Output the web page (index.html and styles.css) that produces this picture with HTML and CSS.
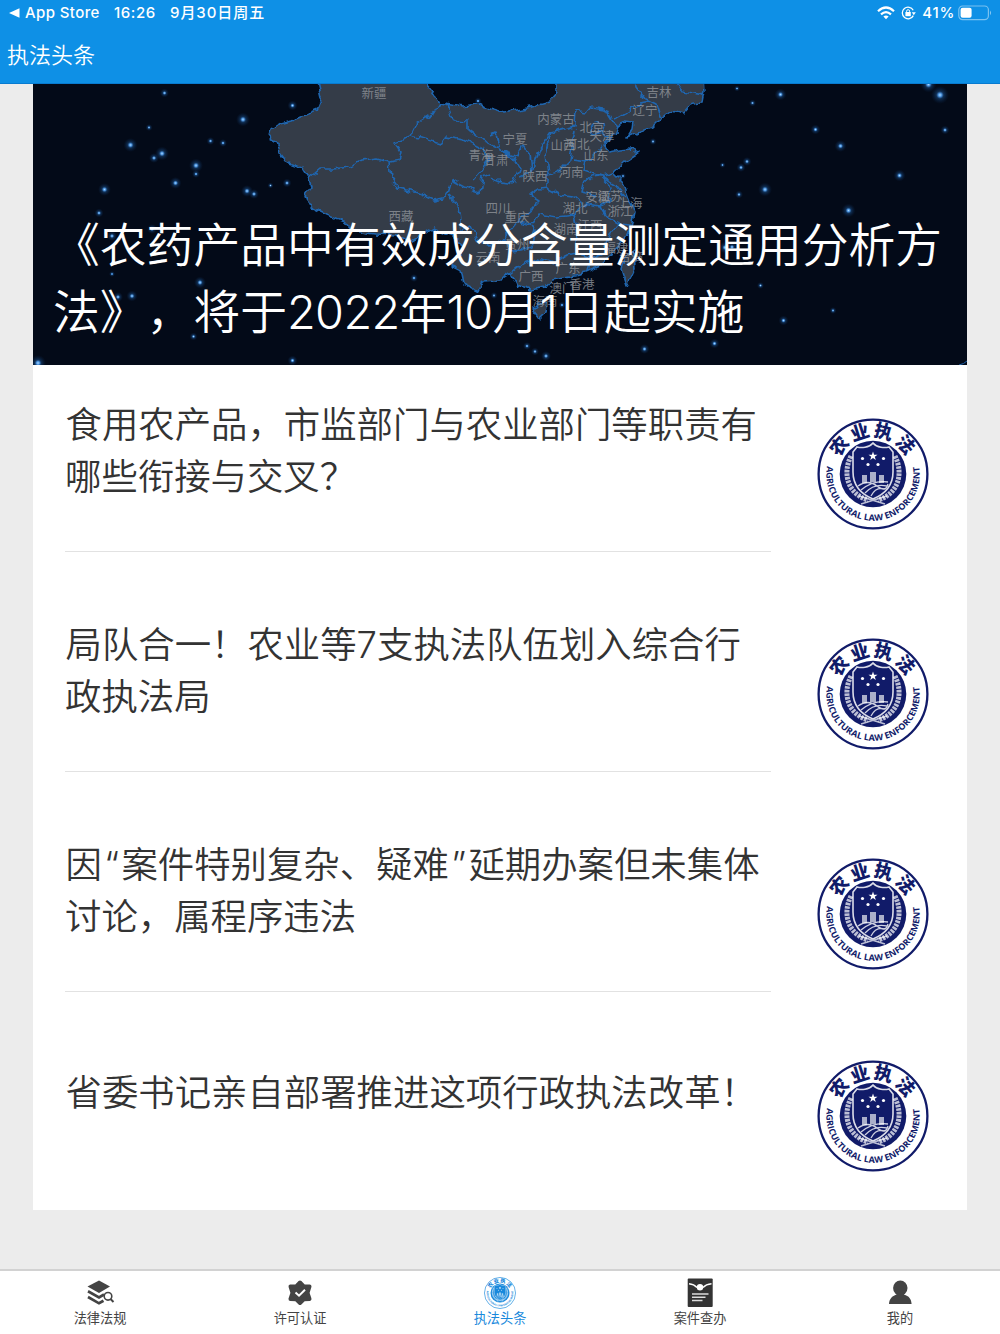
FILE: index.html
```html
<!DOCTYPE html>
<html lang="zh-CN">
<head>
    <meta charset="UTF-8">
    <title>执法头条</title>
    <link rel="stylesheet" href="styles.css">
</head>
<body>
    <svg class="defs" width="0" height="0">
        <defs>
            <path id="arc-bottom" d="M-46 -8 A46.7 46.7 0 1 0 46 -8"/>
            <symbol id="emblem" viewBox="-56 -56 112 112">
                <circle r="54.4" fill="#fff" stroke="currentColor" stroke-width="2.3"/>
                <circle r="33.3" fill="currentColor"/>
                <g class="emblem-cn">
                    <text transform="rotate(-50.5) translate(0 -37)">农</text>
                    <text transform="rotate(-17.5) translate(0 -37)">业</text>
                    <text transform="rotate(14) translate(0 -37)">执</text>
                    <text transform="rotate(48) translate(0 -37)">法</text>
                </g>
                <text class="emblem-en"><textPath href="#arc-bottom" textLength="162" lengthAdjust="spacingAndGlyphs">AGRICULTURAL LAW ENFORCEMENT</textPath></text>
                <!-- wheat -->
                <g fill="none" stroke="#fff" stroke-opacity=".72">
                    <path d="M-22 -18 C-31 0 -25 20 -5 26 M22 -18 C31 0 25 20 5 26" stroke-width="5" stroke-dasharray="2.6 1"/>
                    <path d="M-14 22 L12 30 M14 22 L-12 30" stroke-width="1.5"/>
                </g>
                <!-- shield -->
                <path d="M0 -31 C-4 -26 -12 -26 -16 -27 L-20 -22 V-2 C-20 11 -12 20 0 25 C12 20 20 11 20 -2 V-22 L16 -27 C12 -26 4 -26 0 -31Z" fill="currentColor" stroke="#fff" stroke-opacity=".85" stroke-width="1.6"/>
                <g fill="#fff">
                    <path d="M0 -22.5 L1.1 -19.3 L4.5 -19.3 L1.8 -17.2 L2.8 -14 L0 -16 L-2.8 -14 L-1.8 -17.2 L-4.5 -19.3 L-1.1 -19.3Z"/>
                    <circle cx="-10.5" cy="-15.5" r="1.6"/>
                    <circle cx="10.5" cy="-15.5" r="1.6"/>
                    <circle cx="-5" cy="-9.5" r="1.6"/>
                    <circle cx="5" cy="-9.5" r="1.6"/>
                    <path opacity=".65" d="M-11 1 h5 v8 h-5z M-3 -2 h6 v10 h-6z M6 1 h5 v8 h-5z"/>
                </g>
                <path d="M-15 12 Q-5 5 4 12 T15 10 M-12 16 Q0 6 15 8 M-8 19 Q1 9 14 12 M-2 22 Q3 12 12 15" fill="none" stroke="#fff" stroke-opacity=".8" stroke-width="1.3"/>
            </symbol>
        </defs>
    </svg>

    <header class="header">
        <div class="status-bar">
            <div class="status-left">
                <svg width="11" height="10" viewBox="0 0 11 10"><path d="M0 5 L10.5 .3 V9.7Z" fill="#fff"/></svg>
                <span class="status-app">App Store</span>
                <span class="status-time">16:26</span>
                <span class="status-date">9月30日周五</span>
            </div>
            <div class="status-right">
                <svg width="18" height="14" viewBox="0 0 18 14" fill="none" stroke="#fff" stroke-width="2.2">
                    <path d="M1 5.2 Q9 -2.2 17 5.2"/>
                    <path d="M4 8.4 Q9 3.9 14 8.4"/>
                    <path d="M6.4 10.6 Q9 8.4 11.6 10.6 L9 13.3Z" fill="#fff" stroke="none"/>
                </svg>
                <svg class="lock" width="15" height="14" viewBox="0 0 15 14" fill="none" stroke="#fff" stroke-width="1.3">
                    <path d="M12.2 4.2 A5.8 5.8 0 1 0 12.3 9.6"/>
                    <path d="M10.8 6.2 h4 l-2 3z" fill="#fff" stroke="none"/>
                    <rect x="4.4" y="6" width="5.4" height="4.2" fill="#fff" stroke="none"/>
                    <path d="M5.6 6.4 V5.2 a1.5 1.5 0 0 1 3 0 V6.4" stroke-width="1"/>
                </svg>
                <span class="status-battery">41%</span>
                <svg width="35" height="16" viewBox="0 0 35 16">
                    <rect x=".8" y="1" width="29.6" height="13.6" rx="3.8" fill="none" stroke="#fff" stroke-opacity=".45" stroke-width="1.2"/>
                    <rect x="2.6" y="2.8" width="11" height="10" rx="2" fill="#fff"/>
                    <path d="M32 5.4 q2.2 2.3 0 4.8z" fill="#fff" fill-opacity=".5"/>
                </svg>
            </div>
        </div>
        <h1 class="title">执法头条</h1>
    </header>

    <main class="card">
        <section class="banner">
            <svg class="banner-map" viewBox="33 84 934 281">
                <defs>
                    <filter id="rough" x="-5%" y="-5%" width="110%" height="110%" color-interpolation-filters="sRGB">
                        <feTurbulence type="fractalNoise" baseFrequency=".11" numOctaves="2" seed="4"/>
                        <feDisplacementMap in="SourceGraphic" scale="8" xChannelSelector="R" yChannelSelector="G"/>
                    </filter>
                    <radialGradient id="glow">
                        <stop offset="0" stop-color="#a9d8ff"/>
                        <stop offset=".2" stop-color="#4a91dc"/>
                        <stop offset=".42" stop-color="#174579" stop-opacity=".6"/>
                        <stop offset="1" stop-color="#0a2448" stop-opacity="0"/>
                    </radialGradient>
                </defs>
                <g filter="url(#rough)" stroke="#1f66b0" stroke-width="1.6" stroke-linejoin="round">
                    <path fill="#343c48" d="M317 76 L322 98 L317 110 L291 121 L280 124 L271 130 L269 137 L276 141 L279 153 L286 162 L302 168 L309 179 L311 186 L305 194 L309 206 L326 214 L345 222 L352 231 L375 234 L396 235 L412 241 L434 228 L447 234 L459 238 L463 249 L451 265 L461 270 L464 284 L478 291 L482 281 L500 280 L511 273 L518 286 L530 290 L545 287 L552 279 L570 276 L587 272 L600 266 L612 255 L623 241 L632 226 L635 213 L630 201 L623 183 L613 173 L627 160 L638 153 L630 149 L620 150 L610 152 L604 145 L615 134 L618 127 L612 121 L618 127 L625 122 L633 123 L632 130 L627 138 L640 132 L652 128 L661 119 L671 111 L682 114 L690 105 L702 103 L704 92 L703 76 L557 76 L557 93 L549 102 L527 108 L503 113 L477 105 L462 107 L440 103 L432 90 L420 76Z"/>
                    <path fill="#343c48" d="M533 311 L540 304 L548 303 L546 312 L539 319Z M621 270 L625 257 L634 251 L635 267 L626 286Z"/>
                    <g fill="none">
                        <path d="M309 178 L320 169 L334 169 L350 167 L362 161 L378 159 L389 162 L399 160 L401 152 L394 142 L410 136 L416 124 L434 113 L440 103"/>
                        <path d="M389 162 L391 179 L398 188 L418 193 L434 200 L446 197 L451 180 L464 187 L480 192 L483 177 L490 174"/>
                        <path d="M410 136 L425 139 L441 144 L447 136 L464 139 L484 149 L490 159 L482 170 L474 179"/>
                        <path d="M447 104 L453 120 L468 121 L468 130 L480 139 L498 148 L513 158 L520 169 L514 184 L500 182 L491 178"/>
                        <path d="M449 195 L458 206 L461 230 L470 226 L477 240 L490 246 L504 237 L517 221 L531 209 L539 201 L529 195 L538 189 L551 188"/>
                        <path d="M490 136 L496 133 L500 150 L517 157 L523 145 L530 155 L532 171 L520 176 M532 171 L538 150 L550 133 L574 126 L575 111 L586 113 L591 107 L604 109 L612 122"/>
                        <path d="M551 132 L546 155 L548 175 L548 188 M575 129 L572 146 L570 160 L558 172 L548 175 M572 160 L586 162 L602 146 M586 162 L584 170 L602 176 L613 173"/>
                        <path d="M591 128 L594 121 L602 123 L603 132 L592 135Z M602 132 L608 136 L604 143"/>
                        <path d="M548 188 L559 194 L573 196 L582 204 L600 207 L609 201 L611 188 L600 176 L592 177 L584 184 L582 192 L597 195 M600 176 L616 186 L626 198"/>
                        <path d="M517 221 L532 225 L539 214 L557 217 L574 215 L582 204 M574 215 L578 234 L576 253 L564 256 L554 263 L538 258 L524 263 L512 273"/>
                        <path d="M503 237 L512 251 L520 250 L532 246 L536 231 L532 225 M576 253 L592 258 L604 253 L610 234 L619 224 L631 225 M592 258 L588 271 M600 207 L606 217 L619 224"/>
                        <path d="M635 76 L637 87 L646 99 L656 104 L661 119 M614 119 L628 111 L640 103 L650 101 M670 76 L682 92 L704 96"/>
                    </g>
                </g>
                <g class="province">
                    <text x="374" y="98">新疆</text>
                    <text x="659" y="97">吉林</text>
                    <text x="645" y="115">辽宁</text>
                    <text x="556" y="124">内蒙古</text>
                    <text x="592" y="132">北京</text>
                    <text x="602" y="141">天津</text>
                    <text x="515" y="144">宁夏</text>
                    <text x="563" y="150">山西</text>
                    <text x="577" y="149">河北</text>
                    <text x="481" y="160">青海</text>
                    <text x="496" y="165">甘肃</text>
                    <text x="596" y="160">山东</text>
                    <text x="535" y="181">陕西</text>
                    <text x="571" y="177">河南</text>
                    <text x="401" y="221">西藏</text>
                    <text x="498" y="213">四川</text>
                    <text x="517" y="222">重庆</text>
                    <text x="575" y="213">湖北</text>
                    <text x="598" y="202">安徽</text>
                    <text x="610" y="201">江苏</text>
                    <text x="630" y="208">上海</text>
                    <text x="620" y="216">浙江</text>
                    <text x="566" y="234">湖南</text>
                    <text x="590" y="230">江西</text>
                    <text x="517" y="249">贵州</text>
                    <text x="488" y="262">云南</text>
                    <text x="616" y="253">福建</text>
                    <text x="631" y="262">台湾</text>
                    <text x="531" y="281">广西</text>
                    <text x="568" y="273">广东</text>
                    <text x="582" y="289">香港</text>
                    <text x="562" y="293">澳门</text>
                    <text x="545" y="306">海南</text>
                </g>
                <g fill="url(#glow)">
                    <circle cx="243" cy="119.500" r="7"/>
                    <circle cx="130.500" cy="145" r="7"/>
                    <circle cx="162" cy="153.500" r="7"/>
                    <circle cx="196" cy="165.500" r="7"/>
                    <circle cx="104.500" cy="189.500" r="6.500"/>
                    <circle cx="175.500" cy="183" r="6"/>
                    <circle cx="247" cy="191" r="6"/>
                    <circle cx="254" cy="194" r="5"/>
                    <circle cx="154" cy="158" r="5"/>
                    <circle cx="196" cy="174" r="4"/>
                    <circle cx="164.500" cy="93" r="4.500"/>
                    <circle cx="149" cy="127.500" r="3.500"/>
                    <circle cx="210.500" cy="141" r="4"/>
                    <circle cx="223" cy="143" r="4"/>
                    <circle cx="292.500" cy="105.500" r="5"/>
                    <circle cx="287" cy="183" r="4.500"/>
                    <circle cx="270.500" cy="185.500" r="3"/>
                    <circle cx="99" cy="213" r="4.500"/>
                    <circle cx="152" cy="229" r="5"/>
                    <circle cx="112" cy="236" r="5"/>
                    <circle cx="112" cy="274" r="3"/>
                    <circle cx="132" cy="296" r="5.500"/>
                    <circle cx="118" cy="297" r="5"/>
                    <circle cx="200" cy="282.500" r="6"/>
                    <circle cx="193.500" cy="336.500" r="4"/>
                    <circle cx="292.500" cy="360.500" r="5"/>
                    <circle cx="38" cy="363" r="8"/>
                    <circle cx="414" cy="278" r="4"/>
                    <circle cx="494" cy="295.500" r="3.500"/>
                    <circle cx="562" cy="305" r="3.500"/>
                    <circle cx="527" cy="346" r="4"/>
                    <circle cx="535" cy="351.500" r="4"/>
                    <circle cx="546" cy="356" r="5"/>
                    <circle cx="644.500" cy="349" r="5"/>
                    <circle cx="478" cy="101" r="3.500"/>
                    <circle cx="653" cy="141.500" r="3.500"/>
                    <circle cx="623" cy="176" r="3"/>
                    <circle cx="780.500" cy="94.500" r="6"/>
                    <circle cx="752.500" cy="103" r="3.500"/>
                    <circle cx="737" cy="88.500" r="3"/>
                    <circle cx="928.500" cy="84.500" r="8"/>
                    <circle cx="940" cy="95" r="9"/>
                    <circle cx="945" cy="130" r="4.500"/>
                    <circle cx="815.500" cy="129.500" r="5"/>
                    <circle cx="840.500" cy="146" r="6"/>
                    <circle cx="899.500" cy="175.500" r="6"/>
                    <circle cx="765" cy="189.500" r="7"/>
                    <circle cx="848.500" cy="210.500" r="7"/>
                    <circle cx="747" cy="161.500" r="4.500"/>
                    <circle cx="741" cy="167.500" r="4.500"/>
                    <circle cx="722.500" cy="165" r="3"/>
                    <circle cx="739" cy="194.500" r="4"/>
                    <circle cx="725" cy="247.500" r="6"/>
                    <circle cx="732" cy="247" r="5"/>
                    <circle cx="760.500" cy="285.500" r="3.500"/>
                    <circle cx="783.500" cy="320.500" r="5"/>
                    <circle cx="833" cy="310.500" r="3.500"/>
                    <circle cx="714.500" cy="343.500" r="5"/>
                </g>
                <path d="M959 365 Q964 364 967 361" fill="none" stroke="#1d62ab"/>
            </svg>
            <h2 class="banner-title">《农药产品中有效成分含量测定通用分析方<br>法》<span class="comma">，</span>将于<span class="num">2022</span>年<span class="num">10</span>月<span class="num">1</span>日起实施</h2>
        </section>

        <article class="item first">
            <div class="item-text">食用农产品，市监部门与农业部门等职责有<br>哪些衔接与交叉？</div>
            <svg class="item-logo"><use href="#emblem"/></svg>
        </article>
        <article class="item">
            <div class="item-text">局队合一！农业等7支执法队伍划入综合行<br>政执法局</div>
            <svg class="item-logo"><use href="#emblem"/></svg>
        </article>
        <article class="item">
            <div class="item-text">因<span class="quote">“</span>案件特别复杂、疑难<span class="quote">”</span>延期办案但未集体<br>讨论，属程序违法</div>
            <svg class="item-logo"><use href="#emblem"/></svg>
        </article>
        <article class="item last">
            <div class="item-text">省委书记亲自部署推进这项行政执法改革！</div>
            <svg class="item-logo"><use href="#emblem"/></svg>
        </article>
    </main>

    <nav class="tab-bar">
        <div class="tab">
            <svg class="tab-icon" viewBox="0 0 32 32">
                <path d="M15 3.500 L26 9.500 L15 16 L3.500 9.500Z" fill="#444"/>
                <path d="M4 14.300 L15 20.400 L20 17.500 M4 20 L15 26.300 L19.500 23.800" fill="none" stroke="#444" stroke-width="2.700"/>
                <circle cx="24" cy="19.300" r="3.800" fill="#fff" stroke="#444" stroke-width="1.600"/>
                <path d="M26.500 22 L29.500 25" stroke="#444" stroke-width="2"/>
            </svg>
            <span>法律法规</span>
        </div>
        <div class="tab">
            <svg class="tab-icon" viewBox="0 0 32 32">
                <path d="M16 5.500 L19.800 9.300 L25.500 9.500 L23.500 16 L25.500 22 L19.800 22.300 L16 26 L12.200 22.300 L6.500 22 L8.500 16 L6.500 9.500 L12.200 9.300Z" fill="#444" stroke="#444" stroke-width="4" stroke-linejoin="round"/>
                <path d="M11.500 15.500 L15 18.700 L21 12.700" fill="none" stroke="#fff" stroke-width="2"/>
            </svg>
            <span>许可认证</span>
        </div>
        <div class="tab active">
            <svg class="tab-icon"><use href="#emblem"/></svg>
            <span>执法头条</span>
        </div>
        <div class="tab">
            <svg class="tab-icon" viewBox="0 0 32 32">
                <rect x="3.700" y="1.500" width="25" height="28.500" rx="1" fill="#333"/>
                <path d="M5 6.800 Q10 7.300 13 10.500 M27.500 6.800 Q22 7.300 19 10.500" fill="none" stroke="#fff" stroke-width="1.500"/>
                <circle cx="16" cy="10.300" r="3.200" fill="#fff"/>
                <path d="M8 17 H24.500 M8 20.300 H21.500 M8 23.500 H18.500" stroke="#ddd" stroke-width="1.500"/>
            </svg>
            <span>案件查办</span>
        </div>
        <div class="tab">
            <svg class="tab-icon" viewBox="0 0 32 32" fill="#444">
                <ellipse cx="16.300" cy="11" rx="7.200" ry="7.500"/>
                <path d="M12.500 15 H20 V17.500 C25 19 27.300 22 27.600 27 H5 C5.300 22 8 19 12.500 17.500Z"/>
            </svg>
            <span>我的</span>
        </div>
    </nav>
</body>
</html>
```

FILE: styles.css
```css
* {
    box-sizing: border-box;
}
body {
    margin: 0;
    height: 1334px;
    display: flex;
    flex-direction: column;
    overflow: hidden;
    background-color: #ececec;
    color: #333;
    font-family: Inter, "Noto Sans CJK SC", sans-serif;
}
.defs {
    display: none;
}
svg {
    display: block;
}

/* Header */
.header {
    height: 84px;
    flex-shrink: 0;
    background-color: #0e90e6;
    color: #fff;
    border-bottom: 1px solid #087bd0;
}
.status-bar {
    height: 26px;
    display: flex;
    justify-content: space-between;
    align-items: center;
    padding: 0 7px 0 9px;
    font-size: 15px;
    line-height: 20px;
    font-weight: 500;
}
.status-left,
.status-right {
    display: flex;
    align-items: center;
    white-space: nowrap;
}
.status-app {
    margin-left: 5px;
    width: 89px;
    letter-spacing: 0.4px;
}
.status-time {
    width: 56px;
    letter-spacing: 0.6px;
}
.status-date {
    letter-spacing: 0.95px;
}
.lock {
    margin-left: 6px;
}
.status-battery {
    margin: 0 3px 0 6px;
    letter-spacing: 0.7px;
}
.title {
    margin: 12px 0 0 7px;
    font-size: 22px;
    line-height: 34px;
    font-weight: 350;
}

/* Card */
.card {
    width: 934px;
    height: 1126px;
    margin: 0 auto;
    flex-shrink: 0;
    background-color: #fff;
}
.banner {
    height: 281px;
    display: grid;
    background-color: #030a18;
    color: #fff;
    overflow: hidden;
}
.banner-map,
.banner-title {
    grid-area: 1 / 1;
}
.banner-map {
    width: 934px;
    height: 281px;
}
.province {
    fill: #92969c;
    fill-opacity: 0.8;
    font-size: 12.5px;
    text-anchor: middle;
}
.banner-title {
    z-index: 1;
    align-self: end;
    margin: 0;
    padding: 0 0 19px 20px;
    font-size: 46.8px;
    line-height: 67px;
    font-weight: 350;
    white-space: nowrap;
}
.num {
    letter-spacing: -0.6px;
}
.comma {
    display: inline-block;
    width: 1em;
}

/* List */
.item {
    height: 220px;
    padding: 67px 38px 0 32px;
    display: flex;
    justify-content: space-between;
}
.item.first {
    height: 187px;
    padding-top: 34px;
}
.item-text {
    width: 706px;
    border-bottom: 1px solid #e2e2e2;
    font-size: 36.4px;
    line-height: 52px;
    font-weight: 350;
    text-indent: 0.5px;
    white-space: nowrap;
}
.quote {
    display: inline-block;
    width: 19.5px;
    text-align: center;
    text-indent: 0;
}
.item-logo {
    width: 112px;
    height: 112px;
    margin-top: 18.500px;
    color: #111b69;
}
.item.last {
    padding-top: 68px;
}
.item.last .item-text {
    padding-top: 7px;
    border: none;
}
.item.last .item-logo {
    margin-top: 0;
}

/* Emblem lettering */
.emblem-cn {
    fill: currentColor;
    font-family: "Noto Sans CJK SC", sans-serif;
    font-size: 18.5px;
    font-weight: 900;
    text-anchor: middle;
}
.emblem-en {
    fill: currentColor;
    font-family: "Open Sans", sans-serif;
    font-size: 8.8px;
    font-weight: 700;
}

/* Tab bar */
.tab-bar {
    height: 65px;
    margin-top: auto;
    flex-shrink: 0;
    display: grid;
    grid-template-columns: repeat(5, 1fr);
    background-color: #fff;
    border-top: 2px solid #d2d2d2;
}
.tab {
    display: flex;
    flex-direction: column;
    align-items: center;
    padding-top: 6px;
    font-size: 13.2px;
    line-height: 18px;
    color: #444;
}
.tab-icon {
    width: 32px;
    height: 32px;
}
.active {
    color: #1989dc;
}
```
